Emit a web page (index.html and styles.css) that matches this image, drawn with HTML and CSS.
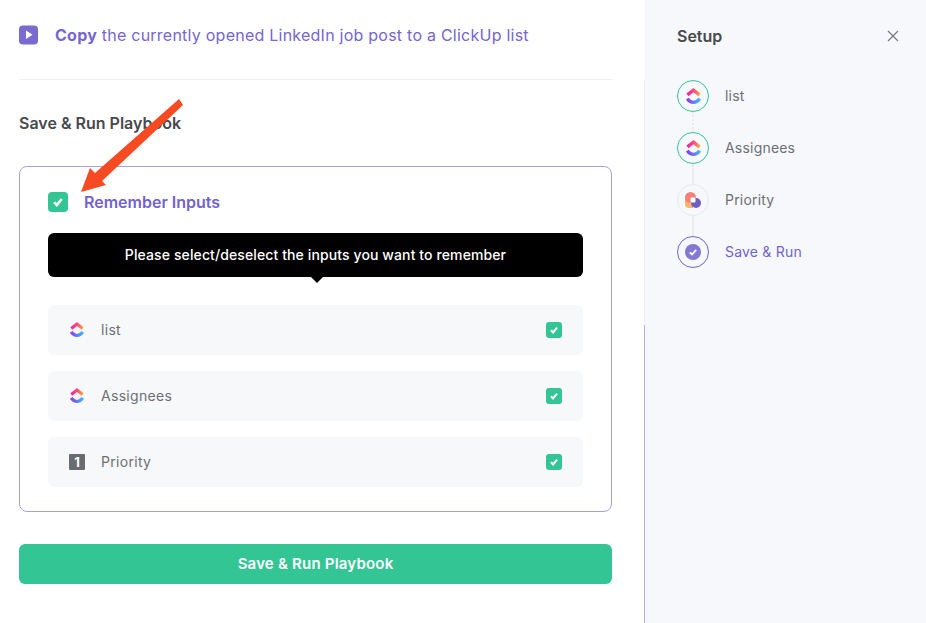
FILE: index.html
```html
<!DOCTYPE html>
<html>
<head>
    <meta charset="UTF-8">
    <title>Save & Run Playbook</title>
    <link rel="stylesheet" href="styles.css">
</head>
<body>
    <svg width="0" height="0" class="defs">
        <defs>
            <linearGradient id="cuTop" x1="0" y1="0" x2="1" y2="0">
                <stop offset="0" stop-color="#f0249f"/>
                <stop offset="0.55" stop-color="#fb4f7c"/>
                <stop offset="1" stop-color="#ffa53a"/>
            </linearGradient>
            <linearGradient id="cuBottom" x1="0" y1="0" x2="1" y2="0">
                <stop offset="0" stop-color="#8a3df0"/>
                <stop offset="1" stop-color="#45b4fb"/>
            </linearGradient>
            <symbol id="clickup" viewBox="0 0 14 16">
                <path d="M1.300 6.500 7 2.100l5.700 4.400" fill="none" stroke="url(#cuTop)" stroke-width="3.200"/>
                <path d="M1.200 10c1.500 2.100 3.500 3.500 5.800 3.500s4.300-1.400 5.800-3.500" fill="none" stroke="url(#cuBottom)" stroke-width="3.200"/>
            </symbol>
            <symbol id="tick" viewBox="0 0 20 20">
                <path d="M6.200 10.300 8.800 13 13.800 7" fill="none" stroke="#fff" stroke-width="2.600"/>
            </symbol>
        </defs>
    </svg>

    <!-- Main panel -->
    <div class="main">
        <div class="playbook-head">
            <svg class="play-icon" width="20" height="20" viewBox="0 0 20 20">
                <rect width="19" height="19" y="0.500" rx="4" fill="#7a6bd0"/>
                <path d="M7 5.500v8.500l6.500-4.250z" fill="#fff"/>
            </svg>
            <div class="playbook-text"><strong>Copy</strong> the currently opened LinkedIn job post to a ClickUp list</div>
        </div>

        <h2 class="section-title">Save &amp; Run Playbook</h2>

        <div class="card">
            <div class="remember">
                <span class="check check-big"><svg width="20" height="20"><use href="#tick"/></svg></span>
                <span class="remember-label">Remember Inputs</span>
            </div>
            <div class="tip">Please select/deselect the inputs you want to remember</div>

            <div class="input-row">
                <svg class="row-icon" width="14" height="16"><use href="#clickup"/></svg>
                <span class="row-name">list</span>
                <span class="check"><svg width="16" height="16"><use href="#tick"/></svg></span>
            </div>
            <div class="input-row">
                <svg class="row-icon" width="14" height="16"><use href="#clickup"/></svg>
                <span class="row-name">Assignees</span>
                <span class="check"><svg width="16" height="16"><use href="#tick"/></svg></span>
            </div>
            <div class="input-row">
                <span class="num-icon">1</span>
                <span class="row-name">Priority</span>
                <span class="check"><svg width="16" height="16"><use href="#tick"/></svg></span>
            </div>
        </div>

        <button class="run-button">Save &amp; Run Playbook</button>
    </div>

    <!-- Setup sidebar -->
    <div class="side">
        <div class="side-head">
            <span class="side-title">Setup</span>
            <svg width="14" height="14" viewBox="0 0 14 14">
                <path d="M2 2l10 10M12 2 2 12" stroke="#76787e" stroke-width="1.200" fill="none"/>
            </svg>
        </div>
        <div class="steps">
            <div class="step">
                <span class="step-dot done"><svg width="15" height="17"><use href="#clickup"/></svg></span>
                <span class="step-name">list</span>
            </div>
            <div class="step">
                <span class="step-dot done"><svg width="15" height="17"><use href="#clickup"/></svg></span>
                <span class="step-name">Assignees</span>
            </div>
            <div class="step">
                <span class="step-dot">
                    <svg width="16" height="16" viewBox="0 0 16 16">
                        <path d="M0 7h8v9H4a4 4 0 0 1-4-4z" fill="#f8b66d"/>
                        <circle cx="5.500" cy="5.500" r="5.500" fill="#f77f7a"/>
                        <circle cx="11" cy="11" r="5" fill="#6f5cc4"/>
                        <rect x="5.500" y="5.500" width="5" height="5" rx="1" fill="#fff"/>
                    </svg>
                </span>
                <span class="step-name">Priority</span>
            </div>
            <div class="step current">
                <span class="step-dot active">
                    <svg width="16" height="16" viewBox="0 0 16 16">
                        <circle cx="8" cy="8" r="8" fill="#8577d6"/>
                        <path d="M4.800 8.300 7 10.500 11.200 5.800" fill="none" stroke="#fff" stroke-width="1.800"/>
                    </svg>
                </span>
                <span class="step-name">Save &amp; Run</span>
            </div>
        </div>
    </div>

    <!-- Red annotation arrow -->
    <svg class="arrow" width="110" height="100" viewBox="0 0 110 100">
        <path d="M1 94 10 70 15 75 99 1 103 7 22 83 26 87z" fill="#f64a22"/>
    </svg>
</body>
</html>
```

FILE: styles.css
```css
body {
    margin: 0;
    height: 623px;
    overflow: hidden;
    display: flex;
    background-color: #fff;
    font-family: Inter, "Liberation Sans", sans-serif;
    position: relative;
}
h2 {
    margin: 0;
}
.defs {
    position: absolute;
}
.main {
    width: 593px;
    padding: 0 33px 0 19px;
    flex-shrink: 0;
}
.playbook-head {
    height: 80px;
    padding-top: 25px;
    box-sizing: border-box;
    display: flex;
    align-items: flex-start;
    border-bottom: 1px solid #efeff2;
}
.play-icon {
    margin-right: 16px;
}
.playbook-text {
    font-size: 16px;
    line-height: 20px;
    color: #7566d2;
    letter-spacing: 0.24px;
}
.playbook-text strong {
    font-weight: 700;
}
.section-title {
    margin-top: 33px;
    font-size: 16px;
    line-height: 20px;
    font-weight: 600;
    color: #48494d;
}
.card {
    margin-top: 33px;
    height: 346px;
    box-sizing: border-box;
    border: 1px solid #a99fe0;
    border-radius: 8px;
    padding: 25px 28px 0;
}
.remember {
    display: flex;
    align-items: center;
    height: 20px;
}
.check {
    width: 16px;
    height: 16px;
    border-radius: 3px;
    background-color: #34c594;
    display: flex;
    flex-shrink: 0;
}
.check-big {
    width: 20px;
    height: 20px;
    border-radius: 4px;
}
.remember-label {
    margin-left: 16px;
    font-size: 16px;
    font-weight: 600;
    color: #7262cf;
}
.tip {
    margin-top: 21px;
    margin-bottom: 28px;
    height: 44px;
    background-color: #000;
    border-radius: 6px;
    color: #fff;
    font-size: 14px;
    font-weight: 500;
    letter-spacing: 0.11px;
    line-height: 44px;
    text-align: center;
    position: relative;
}
.tip::after {
    content: "";
    position: absolute;
    left: 263px;
    top: 44px;
    border-left: 6px solid transparent;
    border-right: 6px solid transparent;
    border-top: 6px solid #000;
}
.input-row {
    height: 50px;
    margin-bottom: 16px;
    padding: 0 21px;
    background-color: #f7f8fa;
    border-radius: 6px;
    display: flex;
    align-items: center;
}
.row-icon {
    margin-left: 1px;
    margin-right: 1px;
}
.row-name {
    flex: 1;
    margin-left: 16px;
    margin-bottom: 2px;
    font-size: 14px;
    color: #6e6f75;
    letter-spacing: 0.3px;
}
.num-icon {
    width: 16px;
    height: 16px;
    background-color: #6b6c72;
    border-radius: 1px;
    color: #fff;
    font-size: 13px;
    font-weight: 700;
    line-height: 16px;
    text-align: center;
}
.run-button {
    display: block;
    width: 100%;
    height: 40px;
    margin-top: 32px;
    padding-bottom: 2px;
    border: none;
    border-radius: 6px;
    background-color: #34c594;
    color: #fff;
    font-family: inherit;
    font-size: 15px;
    font-weight: 600;
    letter-spacing: 0.2px;
}
.side {
    flex: 1;
    background-color: #f7f8fb;
    padding: 0 26px 0 32px;
    position: relative;
}
.side::before {
    content: "";
    position: absolute;
    left: -1px;
    top: 325px;
    bottom: 0;
    width: 1px;
    background-color: #b9aee8;
}
.side::after {
    content: "";
    position: absolute;
    left: -1px;
    top: 80px;
    height: 245px;
    width: 1px;
    background-color: #f1f1f4;
}
.side-head {
    height: 80px;
    padding-top: 26px;
    box-sizing: border-box;
    display: flex;
    justify-content: space-between;
    align-items: flex-start;
}
.side-head svg {
    margin-top: 3px;
}
.side-title {
    font-size: 16px;
    line-height: 20px;
    font-weight: 600;
    color: #48494d;
}
.steps {
    display: flex;
    flex-direction: column;
    gap: 20px;
}
.step {
    display: flex;
    align-items: center;
    height: 32px;
    position: relative;
}
.step + .step::before {
    content: "";
    position: absolute;
    left: 15px;
    top: -20px;
    width: 2px;
    height: 20px;
    background-color: #ececf0;
}
.step:nth-child(2)::before {
    background-color: transparent;
    border-left: 2px dotted #ececf0;
    width: 0;
}
.step-dot {
    width: 32px;
    height: 32px;
    box-sizing: border-box;
    border-radius: 50%;
    border: 1px solid #e8e8ec;
    display: flex;
    align-items: center;
    justify-content: center;
    flex-shrink: 0;
}
.step-dot.done {
    border-color: #34c594;
}
.step-dot.active {
    border-color: #7262cf;
}
.step-name {
    margin-left: 16px;
    margin-bottom: 2px;
    font-size: 14px;
    letter-spacing: 0.2px;
    color: #6e6f75;
}
.current .step-name {
    color: #7262cf;
}
.arrow {
    position: absolute;
    left: 80px;
    top: 98px;
}
```
